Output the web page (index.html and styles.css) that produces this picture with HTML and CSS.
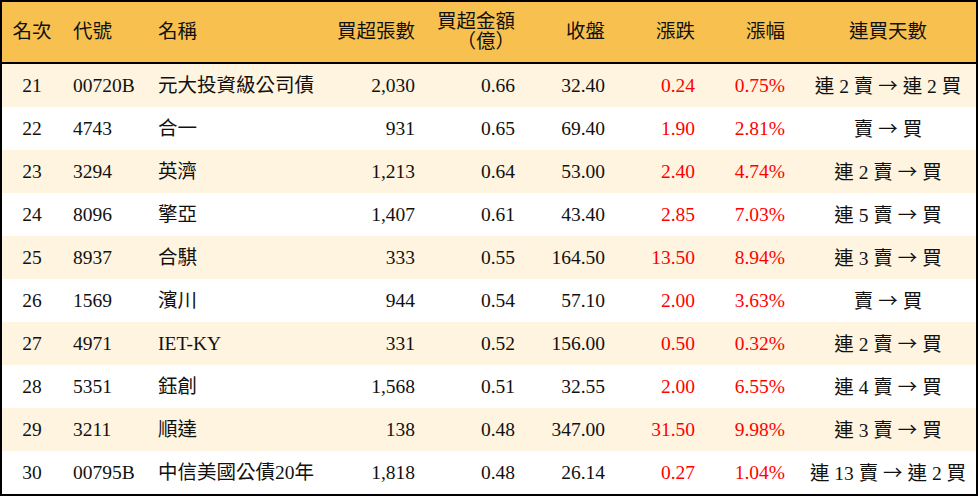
FILE: index.html
```html
<!DOCTYPE html>
<html lang="zh-Hant">
<head>
<meta charset="utf-8">
<title>買超排行</title>
<link rel="stylesheet" href="styles.css">
</head>
<body>
<table class="rank">
  <colgroup>
    <col class="c-rank"><col class="c-code"><col class="c-name"><col class="c-vol"><col class="c-amt"><col class="c-close"><col class="c-chg"><col class="c-pct"><col class="c-days">
  </colgroup>
  <thead>
    <tr>
      <th class="center">名次</th>
      <th class="left code">代號</th>
      <th class="left name">名稱</th>
      <th class="right">買超張數</th>
      <th class="right">買超金額<br>（億）</th>
      <th class="right">收盤</th>
      <th class="right">漲跌</th>
      <th class="right">漲幅</th>
      <th class="center">連買天數</th>
    </tr>
  </thead>
  <tbody>
    <tr class="odd"><td class="center">21</td><td class="left code">00720B</td><td class="left name">元大投資級公司債</td><td class="right">2,030</td><td class="right">0.66</td><td class="right">32.40</td><td class="right up">0.24</td><td class="right up">0.75%</td><td class="center">連 2 賣 <span class="arr">→</span> 連 2 買</td></tr>
    <tr><td class="center">22</td><td class="left code">4743</td><td class="left name">合一</td><td class="right">931</td><td class="right">0.65</td><td class="right">69.40</td><td class="right up">1.90</td><td class="right up">2.81%</td><td class="center">賣 <span class="arr">→</span> 買</td></tr>
    <tr class="odd"><td class="center">23</td><td class="left code">3294</td><td class="left name">英濟</td><td class="right">1,213</td><td class="right">0.64</td><td class="right">53.00</td><td class="right up">2.40</td><td class="right up">4.74%</td><td class="center">連 2 賣 <span class="arr">→</span> 買</td></tr>
    <tr><td class="center">24</td><td class="left code">8096</td><td class="left name">擎亞</td><td class="right">1,407</td><td class="right">0.61</td><td class="right">43.40</td><td class="right up">2.85</td><td class="right up">7.03%</td><td class="center">連 5 賣 <span class="arr">→</span> 買</td></tr>
    <tr class="odd"><td class="center">25</td><td class="left code">8937</td><td class="left name">合騏</td><td class="right">333</td><td class="right">0.55</td><td class="right">164.50</td><td class="right up">13.50</td><td class="right up">8.94%</td><td class="center">連 3 賣 <span class="arr">→</span> 買</td></tr>
    <tr><td class="center">26</td><td class="left code">1569</td><td class="left name">濱川</td><td class="right">944</td><td class="right">0.54</td><td class="right">57.10</td><td class="right up">2.00</td><td class="right up">3.63%</td><td class="center">賣 <span class="arr">→</span> 買</td></tr>
    <tr class="odd"><td class="center">27</td><td class="left code">4971</td><td class="left name">IET-KY</td><td class="right">331</td><td class="right">0.52</td><td class="right">156.00</td><td class="right up">0.50</td><td class="right up">0.32%</td><td class="center">連 2 賣 <span class="arr">→</span> 買</td></tr>
    <tr><td class="center">28</td><td class="left code">5351</td><td class="left name">鈺創</td><td class="right">1,568</td><td class="right">0.51</td><td class="right">32.55</td><td class="right up">2.00</td><td class="right up">6.55%</td><td class="center">連 4 賣 <span class="arr">→</span> 買</td></tr>
    <tr class="odd"><td class="center">29</td><td class="left code">3211</td><td class="left name">順達</td><td class="right">138</td><td class="right">0.48</td><td class="right">347.00</td><td class="right up">31.50</td><td class="right up">9.98%</td><td class="center">連 3 賣 <span class="arr">→</span> 買</td></tr>
    <tr><td class="center">30</td><td class="left code">00795B</td><td class="left name">中信美國公債20年</td><td class="right">1,818</td><td class="right">0.48</td><td class="right">26.14</td><td class="right up">0.27</td><td class="right up">1.04%</td><td class="center">連 13 賣 <span class="arr">→</span> 連 2 買</td></tr>
  </tbody>
</table>
</body>
</html>
```
FILE: styles.css
```css
html, body {
  margin: 0;
  padding: 0;
  background: #ffffff;
}

.rank {
  width: 978px;
  border-collapse: separate;
  border-spacing: 0;
  table-layout: fixed;
  border: 2px solid #000;
  font-family: "Liberation Serif", "Noto Sans CJK TC", serif;
  font-size: 19.5px;
  color: #111;
  text-spacing-trim: space-all;
}

.c-rank { width: 60px; }
.c-code { width: 88px; }
.c-name { width: 180px; }
.c-vol { width: 100px; }
.c-amt { width: 100px; }
.c-close { width: 90px; }
.c-chg { width: 90px; }
.c-pct { width: 90px; }
.c-days { width: 176px; }

.rank th {
  background: #f8c14f;
  height: 60px;
  padding: 0;
  font-weight: normal;
  line-height: 20px;
  border-bottom: 2px solid #000;
  white-space: nowrap;
  vertical-align: middle;
}

.rank td {
  height: 43px;
  padding: 0;
  line-height: 22px;
  white-space: nowrap;
  vertical-align: middle;
}

.rank tr.odd td {
  background: #fef4e0;
}

.center { text-align: center; }
.left { text-align: left; }
.right { text-align: right; padding-right: 15px !important; }

.code { padding-left: 11px !important; }
.name { padding-left: 8px !important; }

.up { color: #ff0000; }

.arr {
  font-family: "Noto Sans CJK TC", sans-serif;
  font-size: 19.5px;
}
```
